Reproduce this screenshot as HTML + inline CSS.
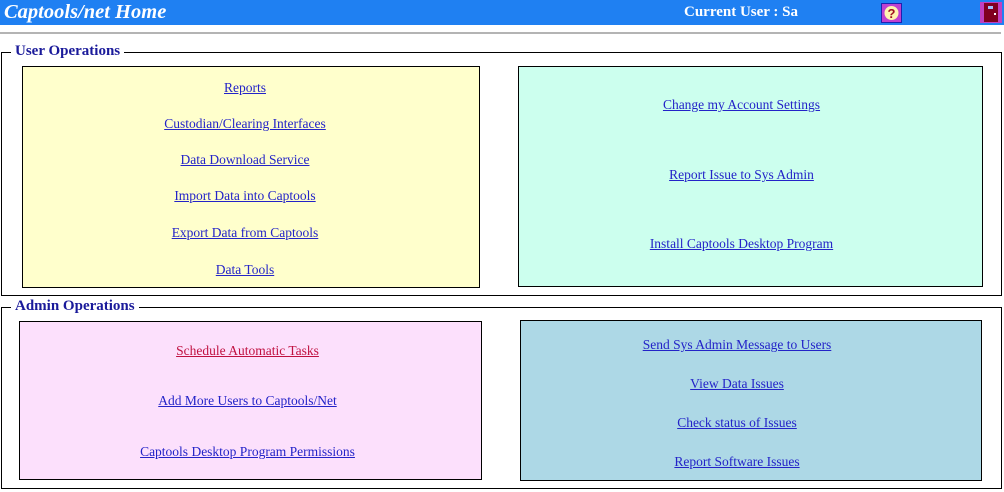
<!DOCTYPE html>
<html><head><meta charset="utf-8"><style>
body{margin:0;width:1004px;height:492px;background:#fff;position:relative;overflow:hidden;font-family:"Liberation Serif",serif}
.a{position:absolute}
.hdr{left:0;top:0;width:1004px;height:25px;background:#1f80f2}
.title{left:4px;top:1px;color:#fff;font-style:italic;font-weight:bold;font-size:20.5px}
.cu{left:684px;top:4px;color:#fff;font-weight:bold;font-size:15px}
.hr{left:0;top:32px;width:1001px;height:2px;background:#b4b4b4}
.fs{border:1px solid #000}
.lg{background:#fff;color:#1a1a9a;font-weight:bold;font-size:15px;padding:0 4px;line-height:16px}
.box{border:1px solid #000}
.l{position:absolute;left:0;text-align:center;font-size:13.5px;color:#2323c8;text-decoration:underline;line-height:14px}
</style></head><body>
<div class="a hdr"></div>
<div class="a title">Captools/net Home</div>
<div class="a cu">Current User : Sa</div>
<svg class="a" style="left:881px;top:3px" width="21" height="20"><rect width="21" height="20" fill="#2020b0"/><rect x="1" y="1" width="19" height="18" fill="#c040d0"/><circle cx="10.5" cy="10" r="7" fill="#fff4b0"/><text x="10.5" y="15" font-size="13" font-weight="bold" text-anchor="middle" fill="#a01020" font-family="Liberation Sans,sans-serif">?</text></svg>
<svg class="a" style="left:980px;top:2px" width="22" height="21"><rect width="22" height="21" fill="#c040c0"/><rect x="4" y="1" width="14" height="19" fill="#800020"/><rect x="8" y="4" width="5" height="3" fill="#a0c0ff"/><rect x="14" y="11" width="2" height="2" fill="#fff"/></svg>
<div class="a hr"></div>

<div class="a fs" style="left:1px;top:52px;width:999px;height:242px"></div>
<div class="a lg" style="left:11px;top:43px">User Operations</div>
<div class="a box" style="left:22px;top:66px;width:456px;height:220px;background:#ffffcc">
<div class="l" style="top:14px;right:12px">Reports</div>
<div class="l" style="top:50px;right:12px">Custodian/Clearing Interfaces</div>
<div class="l" style="top:86px;right:12px">Data Download Service</div>
<div class="l" style="top:122px;right:12px">Import Data into Captools</div>
<div class="l" style="top:159px;right:12px">Export Data from Captools</div>
<div class="l" style="top:196px;right:12px">Data Tools</div>
</div>
<div class="a box" style="left:518px;top:66px;width:463px;height:219px;background:#ccffee">
<div class="l" style="top:31px;right:18px">Change my Account Settings</div>
<div class="l" style="top:101px;right:18px">Report Issue to Sys Admin</div>
<div class="l" style="top:170px;right:18px">Install Captools Desktop Program</div>
</div>

<div class="a fs" style="left:1px;top:307px;width:999px;height:180px"></div>
<div class="a lg" style="left:11px;top:298px">Admin Operations</div>
<div class="a box" style="left:19px;top:321px;width:461px;height:157px;background:#fce0fc">
<div class="l" style="top:22px;right:6px;color:#c01040">Schedule Automatic Tasks</div>
<div class="l" style="top:72px;right:6px">Add More Users to Captools/Net</div>
<div class="l" style="top:123px;right:6px">Captools Desktop Program Permissions</div>
</div>
<div class="a box" style="left:520px;top:320px;width:460px;height:159px;background:#add8e6">
<div class="l" style="top:17px;right:28px">Send Sys Admin Message to Users</div>
<div class="l" style="top:56px;right:28px">View Data Issues</div>
<div class="l" style="top:95px;right:28px">Check status of Issues</div>
<div class="l" style="top:134px;right:28px">Report Software Issues</div>
</div>
</body></html>
